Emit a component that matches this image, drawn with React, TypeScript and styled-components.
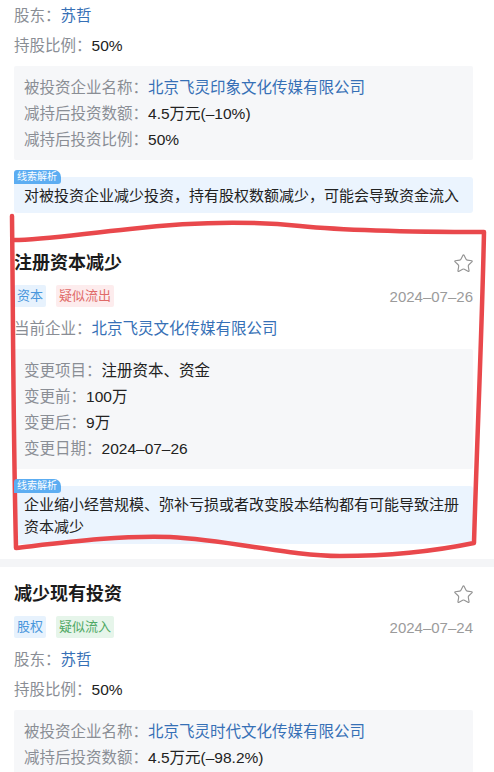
import React from "react";
import styled, { createGlobalStyle } from "styled-components";
import { Star } from "lucide-react";

const GlobalStyle = createGlobalStyle`
  html, body { margin: 0; padding: 0; background: #fff; overflow: hidden; }
  body { font-family: "Liberation Sans", "Noto Sans CJK SC", sans-serif; -webkit-font-smoothing: antialiased; }
  * { box-sizing: border-box; }
`;

const Page = styled.div`
  position: relative;
  width: 494px;
  background: #fff;
`;

const Card = styled.section<{ $top: number; $bottom: number }>`
  padding: ${(p) => p.$top}px 21px ${(p) => p.$bottom}px 14px;
  background: #fff;
`;

const Divider = styled.div<{ $faint?: boolean }>`
  height: 8px;
  background: ${(p) => (p.$faint ? "#fff" : "#f4f5f7")};
`;

const TitleRow = styled.div`
  display: flex;
  align-items: center;
  justify-content: space-between;
  height: 26px;
`;

const Title = styled.h3`
  margin: 0;
  font-size: 18px;
  line-height: 26px;
  font-weight: 600;
  color: #1b1b1b;
`;

const StarWrap = styled.span`
  display: flex;
  width: 21px;
  height: 21px;
  color: #939393;
  margin-right: -1px;
`;

const MetaRow = styled.div`
  display: flex;
  align-items: center;
  justify-content: space-between;
  margin-top: 9px;
  height: 22px;
`;

const Tags = styled.div`
  display: flex;
  gap: 10px;
`;

const tones = {
  blue: { bg: "#e7f2fd", fg: "#4a97dc" },
  red: { bg: "#fdeced", fg: "#e06a68" },
  green: { bg: "#e6f5ea", fg: "#4fa864" },
};

const Tag = styled.span<{ $tone: keyof typeof tones }>`
  display: inline-block;
  height: 22px;
  line-height: 22px;
  padding: 0 3px;
  font-size: 13px;
  border-radius: 2px;
  background: ${(p) => tones[p.$tone].bg};
  color: ${(p) => tones[p.$tone].fg};
`;

const DateText = styled.span`
  font-size: 15px;
  color: #9b9b9b;
`;

const InfoList = styled.div<{ $gap: number }>`
  margin-top: ${(p) => p.$gap}px;
`;

const InfoRow = styled.div`
  display: flex;
  height: 30px;
  line-height: 30px;
  font-size: 15.5px;
  white-space: nowrap;
`;

const Label = styled.span`
  color: #8a8e95;
`;

const Value = styled.span<{ $link?: boolean }>`
  color: ${(p) => (p.$link ? "#3670b6" : "#222")};
`;

const DetailBox = styled.div`
  margin-top: 5px;
  background: #f6f7f9;
  padding: 9px 10px 7px;
  border-radius: 2px;
`;

const DetailRow = styled.div`
  display: flex;
  height: 26px;
  line-height: 26px;
  font-size: 15.5px;
  white-space: nowrap;
`;

const ClueWrap = styled.div`
  margin-top: 10px;
  display: flex;
  flex-direction: column;
  align-items: flex-start;
`;

const ClueTag = styled.span`
  position: relative;
  z-index: 1;
  display: block;
  height: 14px;
  line-height: 14px;
  padding: 0 4px 0 3px;
  font-size: 10px;
  color: #fff;
  background: #5cadf2;
  border-radius: 3px 7px 3px 0;
`;

const ClueBox = styled.div`
  align-self: stretch;
  margin-top: -7px;
  background: #ebf4fe;
  padding: 8px 10px 6px;
  font-size: 15px;
  line-height: 22px;
  color: #222;
  border-radius: 3px;
`;

const Annotation = styled.svg`
  position: absolute;
  left: 0;
  top: 0;
  pointer-events: none;
`;

type Pair = [string, string, boolean?];

const Details = ({ rows }: { rows: Pair[] }) => (
  <DetailBox>
    {rows.map(([l, v, link]) => (
      <DetailRow key={l}>
        <Label>{l}：</Label>
        <Value $link={link}>{v}</Value>
      </DetailRow>
    ))}
  </DetailBox>
);

const Clue = ({ text }: { text: string }) => (
  <ClueWrap>
    <ClueTag>线索解析</ClueTag>
    <ClueBox>{text}</ClueBox>
  </ClueWrap>
);

const Header = ({
  title,
  tags,
  date,
}: {
  title: string;
  tags: [string, keyof typeof tones][];
  date: string;
}) => (
  <>
    <TitleRow>
      <Title>{title}</Title>
      <StarWrap>
        <Star size={21} strokeWidth={1.3} />
      </StarWrap>
    </TitleRow>
    <MetaRow>
      <Tags>
        {tags.map(([t, tone]) => (
          <Tag key={t} $tone={tone}>
            {t}
          </Tag>
        ))}
      </Tags>
      <DateText>{date}</DateText>
    </MetaRow>
  </>
);

export default function App() {
  return (
    <Page>
      <GlobalStyle />
      <Card $top={1} $bottom={15}>
        <InfoList $gap={0}>
          <InfoRow>
            <Label>股东：</Label>
            <Value $link>苏哲</Value>
          </InfoRow>
          <InfoRow>
            <Label>持股比例：</Label>
            <Value>50%</Value>
          </InfoRow>
        </InfoList>
        <Details
          rows={[
            ["被投资企业名称", "北京飞灵印象文化传媒有限公司", true],
            ["减持后投资数额", "4.5万元(–10%)"],
            ["减持后投资比例", "50%"],
          ]}
        />
        <Clue text="对被投资企业减少投资，持有股权数额减少，可能会导致资金流入" />
      </Card>
      <Divider $faint />
      <Card $top={14} $bottom={15}>
        <Header
          title="注册资本减少"
          tags={[
            ["资本", "blue"],
            ["疑似流出", "red"],
          ]}
          date="2024–07–26"
        />
        <InfoList $gap={7}>
          <InfoRow>
            <Label>当前企业：</Label>
            <Value $link>北京飞灵文化传媒有限公司</Value>
          </InfoRow>
        </InfoList>
        <Details
          rows={[
            ["变更项目", "注册资本、资金"],
            ["变更前", "100万"],
            ["变更后", "9万"],
            ["变更日期", "2024–07–26"],
          ]}
        />
        <Clue text="企业缩小经营规模、弥补亏损或者改变股本结构都有可能导致注册资本减少" />
      </Card>
      <Divider />
      <Card $top={14} $bottom={15}>
        <Header
          title="减少现有投资"
          tags={[
            ["股权", "blue"],
            ["疑似流入", "green"],
          ]}
          date="2024–07–24"
        />
        <InfoList $gap={7}>
          <InfoRow>
            <Label>股东：</Label>
            <Value $link>苏哲</Value>
          </InfoRow>
          <InfoRow>
            <Label>持股比例：</Label>
            <Value>50%</Value>
          </InfoRow>
        </InfoList>
        <Details
          rows={[
            ["被投资企业名称", "北京飞灵时代文化传媒有限公司", true],
            ["减持后投资数额", "4.5万元(–98.2%)"],
          ]}
        />
      </Card>
      <Annotation width="494" height="772" viewBox="0 0 494 772">
        <path
          d="M12 216 C13 300 13 420 16 548 C60 543 120 535 170 537 C230 540 290 556 340 556 C400 556 445 549 474 543 C477 440 482 330 484 232 C430 232 350 231 300 226 C250 221 190 222 130 229 C80 234 40 240 14 240"
          fill="none"
          stroke="#e9484c"
          strokeWidth="4.5"
          strokeLinecap="round"
          strokeLinejoin="round"
        />
      </Annotation>
    </Page>
  );
}
